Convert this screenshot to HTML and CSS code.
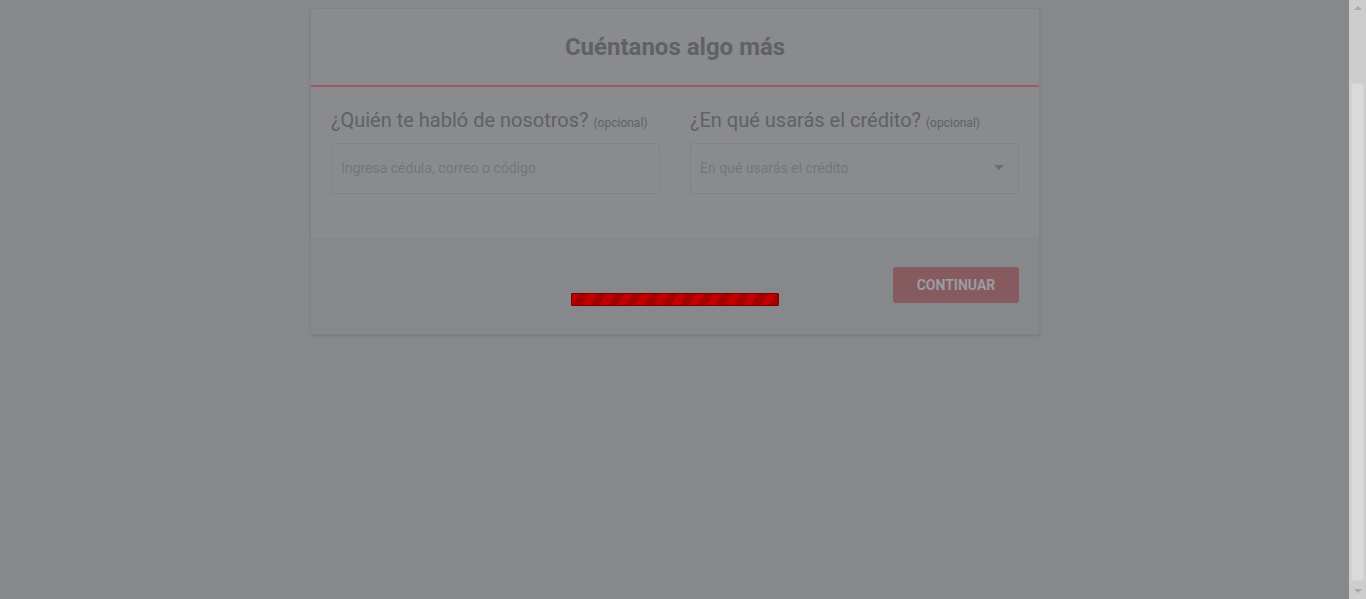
FILE: index.html
```html
<!DOCTYPE html>
<html lang="es">
<head>
<meta charset="utf-8">
<link rel="stylesheet" href="styles.css">
</head>
<body>
<div class="screen">
  <main class="page">
    <section class="card">
      <header class="card-head">
        <h1 class="title">Cuéntanos algo más</h1>
      </header>
      <div class="card-body">
        <div class="field">
          <label class="label">¿Quién te habló de nosotros? <small>(opcional)</small></label>
          <div class="input"><span class="ph">Ingresa cédula, correo o código</span></div>
        </div>
        <div class="field">
          <label class="label">¿En qué usarás el crédito? <small>(opcional)</small></label>
          <div class="input select"><span class="ph">En qué usarás el crédito</span><span class="caret"></span></div>
        </div>
      </div>
      <footer class="card-foot">
        <button class="btn">CONTINUAR</button>
      </footer>
    </section>
    <div class="loader"></div>
  </main>
  <aside class="scrollbar">
    <span class="arrow up"></span>
    <div class="track"><div class="thumb"></div></div>
    <span class="arrow down"></span>
  </aside>
</div>
</body>
</html>
```

FILE: styles.css
```css
* { box-sizing: border-box; }
html, body { margin: 0; padding: 0; height: 100%; }
body {
  font-family: Roboto, "Liberation Sans", Arial, sans-serif;
  background: #86888c;
  overflow: hidden;
}
.screen {
  display: flex;
  height: 599px;
}
.page {
  flex: 1;
  position: relative;
  padding-top: 8px;
  display: flex;
  justify-content: center;
  align-items: flex-start;
}
.card {
  width: 730px;
  background: #898b8f;
  border: 1px solid #818387;
  border-radius: 3px;
  box-shadow: 0 1px 2px rgba(0,0,0,0.12);
  margin-left: 1px;
}
.card-head {
  height: 78px;
  border-bottom: 2px solid #9c5b60;
  display: flex;
  align-items: center;
  justify-content: center;
}
.title {
  margin: 0;
  font-size: 24px;
  font-weight: 700;
  color: #5f6166;
  padding-top: 0;
}
.card-body {
  display: grid;
  grid-template-columns: 1fr 1fr;
  column-gap: 30px;
  padding: 21px 20px 44px 20px;
}
.field { display: flex; flex-direction: column; }
.label {
  font-size: 20px;
  color: #5f6166;
  line-height: 24px;
  margin-bottom: 8px;
}
.label small {
  font-size: 12px;
  color: #5f6166;
}
.input {
  height: 51px;
  border: 1px solid #818387;
  border-radius: 3px;
  display: flex;
  align-items: center;
  padding: 0 9px 2px 9px;
}
.ph {
  font-size: 14px;
  color: #74767a;
  flex: 1;
}
.caret {
  width: 0; height: 0;
  border-left: 5px solid transparent;
  border-right: 5px solid transparent;
  border-top: 5px solid #6c6e72;
  margin-right: 5px;
}
.card-foot {
  background: #86888c;
  border-top: 1px solid #84868a;
  height: 96px;
  display: flex;
  justify-content: flex-end;
  align-items: flex-start;
  padding: 28px 20px 0 0;
}
.btn {
  width: 126px;
  height: 36px;
  border: none;
  border-radius: 3px;
  background: #865b60;
  color: #9a9ca0;
  font-family: Roboto, "Liberation Sans", Arial, sans-serif;
  font-weight: 700;
  font-size: 14px;
  letter-spacing: 0;
  padding: 0;
}
.loader {
  position: absolute;
  top: 293px;
  left: 571px;
  width: 208px;
  height: 13px;
  border: 1px solid #7a0000;
  border-radius: 1px;
  background: repeating-linear-gradient(-57deg, #a40000 0 7.5px, #c20000 7.5px 15px);
}
.scrollbar {
  width: 17px;
  background: #cdcdcd;
  display: flex;
  flex-direction: column;
  align-items: center;
}
.arrow {
  width: 0; height: 0;
  border-left: 4px solid transparent;
  border-right: 4px solid transparent;
  margin: 6px 0;
}
.arrow.up { border-bottom: 4px solid #a8a8a8; }
.arrow.down { border-top: 4px solid #a8a8a8; }
.track {
  flex: 1;
  width: 100%;
  padding: 67px 2px 2px 2px;
}
.thumb {
  height: 100%;
  background: #dadada;
  border: 1px solid #d2d2d2;
}
```
